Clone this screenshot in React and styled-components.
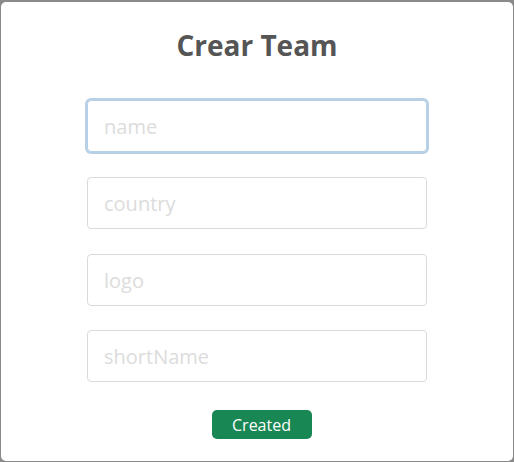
import React, { useEffect, useRef } from 'react';
import styled, { createGlobalStyle } from 'styled-components';

const GlobalStyle = createGlobalStyle`
  html, body {
    margin: 0;
    padding: 0;
    background: #8a8a8a;
    font-family: "Open Sans", "Noto Sans", sans-serif;
  }
  * { box-sizing: border-box; }
`;

const Card = styled.div`
  margin: 2px 1px 1px 1px;
  height: 459px;
  background: #fff;
  border-radius: 5px;
  display: flex;
  flex-direction: column;
  align-items: center;
`;

const Title = styled.h1`
  margin: 26px 0 0;
  font-size: 28px;
  line-height: 34px;
  font-weight: 700;
  color: #555;
`;

const Form = styled.form`
  width: 340px;
  margin-top: 38px;
  display: flex;
  flex-direction: column;
  align-items: center;
  gap: 25px;
`;

const Field = styled.input`
  width: 100%;
  height: 52px;
  padding: 0 16px;
  font-family: inherit;
  font-size: 20px;
  color: #333;
  background: #fff;
  border: 1px solid #dadada;
  border-radius: 4px;
  outline: none;

  &::placeholder {
    color: #dcdcdc;
  }

  &:focus {
    border-color: #b7d0e6;
    box-shadow: 0 0 0 2px #b7d0e6;
  }

  &:last-of-type {
    margin-top: -1px;
  }
`;

const Submit = styled.button`
  margin: 3px 0 0 9px;
  width: 100px;
  height: 29px;
  border: none;
  border-radius: 5px;
  background: #198754;
  color: #fff;
  font-family: inherit;
  font-size: 16px;
  cursor: pointer;
`;

const fields = ['name', 'country', 'logo', 'shortName'];

export default function App() {
  const first = useRef(null);

  useEffect(() => {
    first.current?.focus();
  }, []);

  return (
    <>
      <GlobalStyle />
      <Card>
        <Title>Crear Team</Title>
        <Form onSubmit={(e) => e.preventDefault()}>
          {fields.map((f, i) => (
            <Field key={f} ref={i === 0 ? first : null} placeholder={f} />
          ))}
          <Submit type="submit">Created</Submit>
        </Form>
      </Card>
    </>
  );
}
